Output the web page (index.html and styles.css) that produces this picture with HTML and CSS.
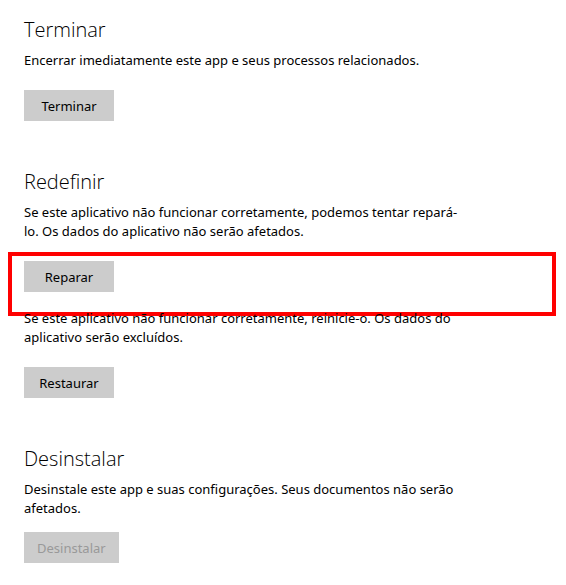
FILE: index.html
```html
<!DOCTYPE html>
<html lang="pt-BR">
<head>
    <meta charset="UTF-8">
    <meta name="viewport" content="width=device-width, initial-scale=1.0">
    <title>Configurações do app</title>
    <link rel="stylesheet" href="styles.css">
</head>
<body>
    <div class="page">
        <section class="group">
            <h2>Terminar</h2>
            <div class="item">
                <p>Encerrar imediatamente este app e seus processos relacionados.</p>
                <button class="btn">Terminar</button>
            </div>
        </section>

        <section class="group">
            <h2>Redefinir</h2>
            <div class="item highlighted">
                <p>Se este aplicativo não funcionar corretamente, podemos tentar repará-lo. Os dados do aplicativo não serão afetados.</p>
                <button class="btn">Reparar</button>
                <div class="marker"></div>
            </div>
            <div class="item">
                <p>Se este aplicativo não funcionar corretamente, reinicie-o. Os dados do aplicativo serão excluídos.</p>
                <button class="btn">Restaurar</button>
            </div>
        </section>

        <section class="group">
            <h2>Desinstalar</h2>
            <div class="item">
                <p class="tight">Desinstale este app e suas configurações. Seus documentos não serão afetados.</p>
                <button class="btn" disabled>Desinstalar</button>
            </div>
        </section>
    </div>
</body>
</html>
```

FILE: styles.css
```css
  body {
      font-family: 'Noto Sans', 'Open Sans', sans-serif;
      background-color: #ffffff;
      color: #000000;
      margin: 0;
      padding: 0;
  }
  .page {
      padding: 16px 24px 0;
      max-width: 440px;
  }
  .group {
      margin-bottom: 47px;
  }
  .group:last-child {
      margin-bottom: 0;
  }
  .group h2 {
      font-family: 'Open Sans', 'Noto Sans', sans-serif;
      font-weight: 300;
      font-size: 20px;
      line-height: 28px;
      margin: 0 0 7px;
  }
  .item {
      position: relative;
  }
  .item + .item {
      margin-top: 17px;
  }
  .item p {
      font-size: 13px;
      line-height: 19px;
      margin: 0 0 20px;
  }
  .item p.tight {
      margin-bottom: 14px;
  }
  .btn {
      font-family: inherit;
      font-size: 13px;
      color: #000000;
      background-color: #cccccc;
      border: none;
      min-width: 90px;
      height: 31px;
      padding: 0 13px;
      cursor: pointer;
  }
  .btn:disabled {
      color: #999999;
      cursor: default;
  }
  /* red annotation frame around the repair button */
  .marker {
      position: absolute;
      left: -16px;
      top: 49px;
      width: 540px;
      height: 56px;
      border: 4px solid #ff0000;
      pointer-events: none;
  }
```
